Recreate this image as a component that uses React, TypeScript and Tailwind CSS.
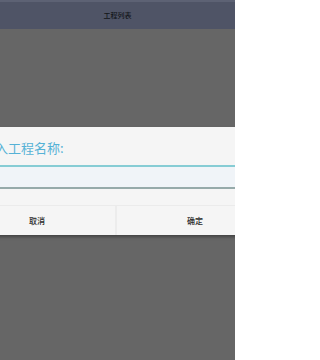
import React from "react";

export default function App() {
  return (
    <div
      className="relative w-[235px] h-[360px] overflow-hidden bg-[#666666]"
      style={{ fontFamily: '"Noto Sans CJK SC", "Noto Sans", sans-serif' }}
    >
      <div className="h-[29px] bg-[#4f5466] border-t-2 border-[#5d6274] flex items-center justify-center">
        <span className="text-[7px] leading-none font-medium text-[#121419]">工程列表</span>
      </div>
      <div className="h-[98px]" />
      <div className="w-[314px] ml-[-41px] bg-[#f5f5f5] shadow-[0_2px_3px_rgba(0,0,0,0.35)] flex flex-col">
        <div className="h-[38px] flex items-center pl-[23px] pt-[2px]">
          <span className="text-[13px] leading-none text-[#55b2d6]">输入工程名称:</span>
        </div>
        <div className="h-[2px] bg-[#86ccd4]" />
        <div className="h-[20px] bg-[#f0f4f8]" />
        <div className="h-[2px] bg-[#96aaaa]" />
        <div className="h-[16px]" />
        <div className="h-[30px] border-t border-[#ebebeb] flex">
          <div className="w-[158px] flex items-center justify-center border-r-2 border-[#ececec]">
            <span className="text-[8px] leading-none font-medium text-[#2a2a2a]">取消</span>
          </div>
          <div className="flex-1 flex items-center justify-center">
            <span className="text-[8px] leading-none font-medium text-[#2a2a2a]">确定</span>
          </div>
        </div>
      </div>
    </div>
  );
}
